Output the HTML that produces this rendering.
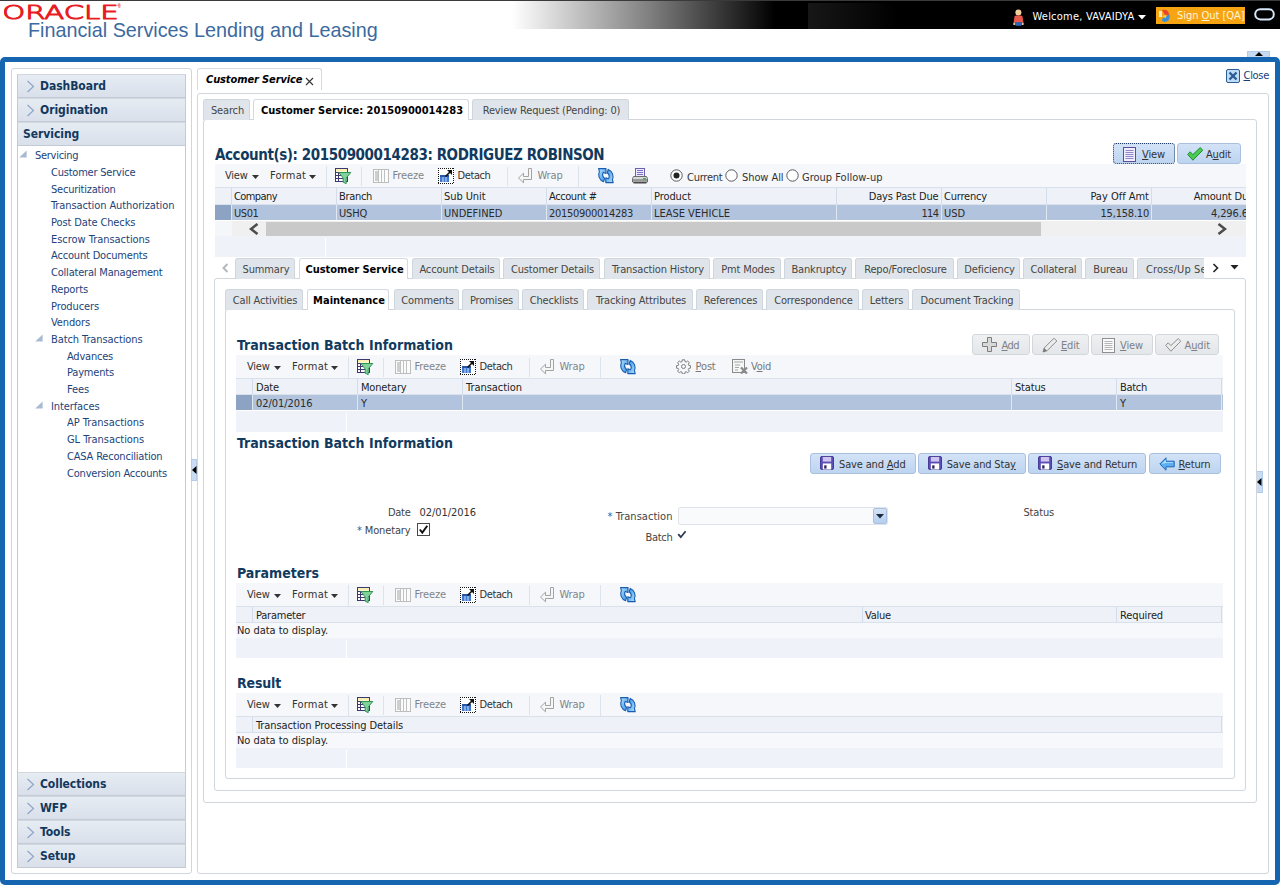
<!DOCTYPE html>
<html><head><meta charset="utf-8"><title>Oracle Financial Services Lending and Leasing</title>
<style>
*{box-sizing:border-box;margin:0;padding:0}
html,body{width:1280px;height:886px;overflow:hidden;background:#fff}
body{position:relative;font-family:"DejaVu Sans Condensed","Liberation Sans",sans-serif;font-size:11px;color:#333}
.abs{position:absolute}
.t{position:absolute;white-space:nowrap;line-height:14px;font-size:11px;letter-spacing:-0.15px}
.g{color:#8a8f94}
u{text-decoration:underline}
#hdr{position:absolute;left:0;top:0;width:1280px;height:29px;background:linear-gradient(90deg,#fff 0,#fff 512px,#7f7f7f 650px,#000 775px,#000 1280px)}
#hdrline{position:absolute;left:0;top:0;width:1280px;height:1px;background:#3a3a3a}
#brand{position:absolute;left:28px;top:18px;font-family:"Liberation Sans",sans-serif;font-size:19.8px;line-height:24px;color:#3b6a9e;white-space:nowrap}
#frame{position:absolute;left:0;top:57px;width:1280px;height:828px;border:5px solid #1565b0;border-radius:5px;background:#fff}
.panel{position:absolute;border:1px solid #d0d6dc;border-radius:3px;background:#fff}
.acc{position:absolute;left:17px;width:169px;height:24px;border:1px solid #c2cbd5;border-top-color:#d0d7e0;background:linear-gradient(#e7ecf3,#d9e0ea);font-weight:bold;font-size:12px;color:#12385e;line-height:22px;white-space:nowrap}
.acc span{position:absolute;left:22px;top:0;letter-spacing:-0.05px}
.acc svg{position:absolute;left:8px;top:5px}
#tree{position:absolute;left:17px;top:146px;width:169px;height:626px;border-left:1px solid #c2cbd5;border-right:1px solid #c2cbd5;background:#fff}
.tn{position:absolute;white-space:nowrap;color:#1c437a;line-height:14px;font-size:11px;letter-spacing:-0.1px}
.tab{position:absolute;height:21px;border:1px solid #cfd6dd;border-bottom:none;border-radius:3px 3px 0 0;background:#e0e5eb;color:#4a4a4a;font-size:11px;line-height:21px;text-align:center;white-space:nowrap;letter-spacing:-0.15px;padding-left:2px;color:#454545}
.tab.sel{background:#fff;color:#000;font-weight:bold;height:21px;line-height:21px;border-color:#d4dae0;letter-spacing:0}
.h1{position:absolute;white-space:nowrap;font-weight:bold;color:#113a5e;line-height:18px}
.tb{position:absolute;background:#f5f7fa}
.th{position:absolute;background:#eef2f8;border-top:1px solid #d9e1eb;border-bottom:1px solid #d9e1eb}
.cs{position:absolute;width:1px;background:#d3dce8}
.row{position:absolute;background:#b2c4dd}
.empty{position:absolute;background:#eff3f9}
.btn{position:absolute;height:21px;border:1px solid #a9c0de;border-radius:3px;background:linear-gradient(#d3e3f7,#bdd4f0);font-size:11px;line-height:21px;color:#333;white-space:nowrap}
.btn.dis{border-color:#d3d7db;background:linear-gradient(#eef0f2,#e4e7ea);color:#7c8187}
.btn span{position:absolute;top:0;letter-spacing:-0.15px}
.btn svg{position:absolute}
.sep{position:absolute;width:1px;background:#dde3ea}
</style></head><body>
<svg width="0" height="0" style="position:absolute"><defs><linearGradient id="rg" x1="0" y1="0" x2="1" y2="1"><stop offset="0" stop-color="#b4e2fd"/><stop offset="1" stop-color="#2f8de0"/></linearGradient></defs></svg>
<div id="hdr"></div><div class="abs" style="left:808px;top:3px;width:90px;height:26px;background:linear-gradient(90deg,#171717,#000)"></div><div id="hdrline"></div>
<svg class="abs" style="left:4px;top:3px" width="120" height="18"><text x="-1.8" y="16" font-family="DejaVu Sans Light, DejaVu Sans, Liberation Sans, sans-serif" font-weight="200" font-size="19.4" fill="#e81c23" stroke="#e81c23" stroke-width="1" stroke-linejoin="round" textLength="116.5" lengthAdjust="spacingAndGlyphs">ORACLE</text><text x="113.6" y="4.6" font-family="Liberation Sans, sans-serif" font-size="4.5" font-weight="bold" fill="#e81c23">®</text></svg>
<div id="brand">Financial Services Lending and Leasing</div>
<div id="frame"></div>
<div class="panel" style="left:11px;top:68px;width:181px;height:806px"></div>
<div class="acc" style="top:74px"><svg width="9" height="13" viewBox="0 0 9 13"><path d="M1.5 1 L7.5 6.5 L1.5 12" fill="none" stroke="#8fa5c4" stroke-width="1.2"/></svg><span>DashBoard</span></div>
<div class="acc" style="top:98px"><svg width="9" height="13" viewBox="0 0 9 13"><path d="M1.5 1 L7.5 6.5 L1.5 12" fill="none" stroke="#8fa5c4" stroke-width="1.2"/></svg><span>Origination</span></div>
<div class="acc" style="top:122px"><span style="left:5px">Servicing</span></div>
<div id="tree"></div>
<div class="tn" style="left:35px;top:149px;letter-spacing:-0.28px">Servicing</div>
<svg class="abs" style="left:19px;top:150px" width="8" height="8" viewBox="0 0 8 8"><path d="M7.6 0.4 L7.6 7.6 L0.2 7.6 Z" fill="#a9bbd2"/></svg>
<div class="tn" style="left:51px;top:166px;letter-spacing:-0.22px">Customer Service</div>
<div class="tn" style="left:51px;top:183px;letter-spacing:-0.23px">Securitization</div>
<div class="tn" style="left:51px;top:199px;letter-spacing:-0.10px">Transaction Authorization</div>
<div class="tn" style="left:51px;top:216px;letter-spacing:-0.12px">Post Date Checks</div>
<div class="tn" style="left:51px;top:233px;letter-spacing:-0.03px">Escrow Transactions</div>
<div class="tn" style="left:51px;top:249px;letter-spacing:-0.18px">Account Documents</div>
<div class="tn" style="left:51px;top:266px;letter-spacing:-0.20px">Collateral Management</div>
<div class="tn" style="left:51px;top:283px;letter-spacing:-0.13px">Reports</div>
<div class="tn" style="left:51px;top:300px;letter-spacing:-0.11px">Producers</div>
<div class="tn" style="left:51px;top:316px;letter-spacing:-0.12px">Vendors</div>
<div class="tn" style="left:51px;top:333px;letter-spacing:-0.09px">Batch Transactions</div>
<svg class="abs" style="left:35px;top:334px" width="8" height="8" viewBox="0 0 8 8"><path d="M7.6 0.4 L7.6 7.6 L0.2 7.6 Z" fill="#a9bbd2"/></svg>
<div class="tn" style="left:67px;top:350px;letter-spacing:-0.22px">Advances</div>
<div class="tn" style="left:67px;top:366px;letter-spacing:-0.18px">Payments</div>
<div class="tn" style="left:67px;top:383px;letter-spacing:-0.11px">Fees</div>
<div class="tn" style="left:51px;top:400px;letter-spacing:-0.10px">Interfaces</div>
<svg class="abs" style="left:35px;top:401px" width="8" height="8" viewBox="0 0 8 8"><path d="M7.6 0.4 L7.6 7.6 L0.2 7.6 Z" fill="#a9bbd2"/></svg>
<div class="tn" style="left:67px;top:416px;letter-spacing:-0.02px">AP Transactions</div>
<div class="tn" style="left:67px;top:433px;letter-spacing:-0.05px">GL Transactions</div>
<div class="tn" style="left:67px;top:450px;letter-spacing:-0.19px">CASA Reconciliation</div>
<div class="tn" style="left:67px;top:467px;letter-spacing:-0.20px">Conversion Accounts</div>
<div class="acc" style="top:772px"><svg width="9" height="13" viewBox="0 0 9 13"><path d="M1.5 1 L7.5 6.5 L1.5 12" fill="none" stroke="#8fa5c4" stroke-width="1.2"/></svg><span>Collections</span></div>
<div class="acc" style="top:796px"><svg width="9" height="13" viewBox="0 0 9 13"><path d="M1.5 1 L7.5 6.5 L1.5 12" fill="none" stroke="#8fa5c4" stroke-width="1.2"/></svg><span>WFP</span></div>
<div class="acc" style="top:820px"><svg width="9" height="13" viewBox="0 0 9 13"><path d="M1.5 1 L7.5 6.5 L1.5 12" fill="none" stroke="#8fa5c4" stroke-width="1.2"/></svg><span>Tools</span></div>
<div class="acc" style="top:844px"><svg width="9" height="13" viewBox="0 0 9 13"><path d="M1.5 1 L7.5 6.5 L1.5 12" fill="none" stroke="#8fa5c4" stroke-width="1.2"/></svg><span>Setup</span></div>
<div class="abs" style="left:191px;top:459px;width:6px;height:22px;background:#c9dcf3;border:1px solid #b4cbe8"></div>
<svg class="abs" style="left:192px;top:466px" width="5" height="8" viewBox="0 0 5 8"><path d="M4.5 0 L4.5 8 L0 4 Z" fill="#000"/></svg>
<div class="panel" style="left:197px;top:93px;width:1072px;height:781px"></div>
<div class="abs" style="left:197px;top:68px;width:125px;height:22px;border:1px solid #d4dae0;border-bottom:none;border-radius:3px 3px 0 0;background:#fff"></div>
<div class="t" style="left:206px;top:73px;font-weight:bold;font-style:italic;color:#000;letter-spacing:-0.11px">Customer Service</div>
<svg class="abs" style="left:305px;top:77px" width="9" height="9" viewBox="0 0 9 9"><path d="M1 1 L8 8 M8 1 L1 8" stroke="#333" stroke-width="1.1" fill="none"/></svg>
<svg class="abs" style="left:1226px;top:69px" width="14" height="14" viewBox="0 0 14 14"><rect x="0.5" y="0.5" width="13" height="13" rx="1.5" fill="#bfdcf7" stroke="#2a5d94"/><path d="M3.5 3.5 L10.5 10.5 M10.5 3.5 L3.5 10.5" stroke="#2a5d94" stroke-width="2.4"/></svg>
<div class="t" style="left:1243.5px;top:69px;color:#1b3b78;letter-spacing:-0.30px"><u>C</u>lose</div>
<div class="abs" style="left:1247px;top:51px;width:23px;height:6px;background:#c6daf1;border:1px solid #b3cae6;border-bottom:none"></div>
<svg class="abs" style="left:1255px;top:52px" width="8" height="4" viewBox="0 0 8 4"><path d="M0 4 L8 4 L4 0 Z" fill="#000"/></svg>
<div class="abs" style="left:1256px;top:471px;width:7px;height:22px;background:#c9dcf3;border:1px solid #b4cbe8"></div>
<svg class="abs" style="left:1257px;top:478px" width="5" height="8" viewBox="0 0 5 8"><path d="M4.5 0 L4.5 8 L0 4 Z" fill="#000"/></svg>
<div class="panel" style="left:203px;top:119px;width:1054px;height:684px"></div>
<div class="tab" style="left:203px;top:99px;width:47px">Search</div>
<div class="tab sel" style="left:253px;top:99px;width:216px">Customer Service: 20150900014283</div>
<div class="tab" style="left:472px;top:99px;width:157px">Review Request (Pending: 0)</div>
<div class="h1" style="left:215px;top:146px;font-size:15px;letter-spacing:-0.42px">Account(s): 20150900014283: RODRIGUEZ ROBINSON</div>
<div class="btn" style="left:1113px;top:143px;width:62px;border:1px dotted #1d3c66;"><svg style="left:9px;top:3px" width="13" height="15" viewBox="0 0 13 15"><rect x="0.5" y="0.5" width="12" height="14" fill="#f0edfc" stroke="#5b4f9a"/><path d="M2.5 3.5h8M2.5 5.5h8M2.5 7.5h8M2.5 9.5h8M2.5 11.5h8" stroke="#8f86c4" stroke-width="1"/></svg><span style="left:28px;letter-spacing:-0.12px"><u>V</u>iew</span></div>
<div class="btn" style="left:1177px;top:143px;width:64px;"><svg style="left:9px;top:3px" width="17" height="14" viewBox="0 0 17 14"><path d="M0.7 7.4 L3.2 4.8 L5.9 7.6 L13.2 0.6 L15.8 3.2 L5.9 13.2 Z" fill="#4cc955" stroke="#1f8f2c" stroke-width="1" stroke-linejoin="round"/></svg><span style="left:28px;letter-spacing:-0.20px">A<u>u</u>dit</span></div>
<div class="tb" style="left:215px;top:164px;width:1031px;height:23px"></div>
<div class="t" style="left:225px;top:169px;letter-spacing:-0.24px">View</div>
<svg class="abs" style="left:252px;top:175px" width="7" height="4" viewBox="0 0 7 4"><path d="M0 0 L7 0 L3.5 4 Z" fill="#333"/></svg>
<div class="t" style="left:270px;top:169px;letter-spacing:0.20px">Format</div>
<svg class="abs" style="left:309px;top:175px" width="7" height="4" viewBox="0 0 7 4"><path d="M0 0 L7 0 L3.5 4 Z" fill="#333"/></svg>
<div class="sep" style="left:326px;top:166px;height:23px"></div>
<svg class="abs" style="left:335px;top:168px" width="17" height="17" viewBox="0 0 17 17"><rect x="0.5" y="0.5" width="12" height="13" fill="#fff" stroke="#3f3870"/><rect x="1" y="1" width="11" height="2.6" fill="#fbf0b4"/><path d="M0.5 4.5h12M0.5 7.5h6M0.5 10.5h8M3.5 4.5v9" stroke="#3f3870" stroke-width="1" fill="none"/><path d="M3.8 4.5 L15.8 4.5 L11.2 10 L11.2 15.6 L8.2 14.2 L8.2 10 Z" fill="#7fd39a" stroke="#2f9455" stroke-width="1" stroke-linejoin="round"/></svg>
<div class="sep" style="left:361px;top:167px;height:19px"></div>
<svg class="abs" style="left:373px;top:169px" width="16" height="14" viewBox="0 0 16 14"><rect x="0.5" y="0.5" width="15" height="13" fill="#fbfbfb" stroke="#bdbdbd"/><rect x="2" y="2" width="3" height="10" fill="#cfcfcf"/><path d="M5.5 1v12M8.5 1v12M11.5 1v12" stroke="#c2c2c2" stroke-width="1"/></svg>
<div class="t" style="left:392.5px;top:169px;color:#80858b;letter-spacing:-0.11px">Freeze</div>
<svg class="abs" style="left:438px;top:168px" width="16" height="16" viewBox="0 0 16 16"><rect x="0" y="0" width="16" height="16" fill="#fff"/><path d="M0 0.5H16M0 15.5H16M0.5 0V16M15.5 0V16" stroke="#111" stroke-width="1" stroke-dasharray="1 1" fill="none"/><rect x="2" y="7" width="9" height="7" fill="#3f78d0"/><path d="M5 9v5M8 9v5" stroke="#cfe0f7" stroke-width="1"/><rect x="2" y="7" width="9" height="2" fill="#2a56a8"/><path d="M7.5 8.5 L13 3" stroke="#111" stroke-width="1.6"/><path d="M9 2 L14 2 L14 7 Z" fill="#111"/></svg>
<div class="t" style="left:457.5px;top:169px;letter-spacing:-0.40px">Detach</div>
<div class="sep" style="left:507px;top:167px;height:19px"></div>
<svg class="abs" style="left:518px;top:168px" width="15" height="16" viewBox="0 0 15 16"><path d="M10.5 0.5 h3 v11 h-8 v3.3 l-5 -4.8 l5 -4.8 v3.3 h5 z" fill="#f6f6f6" stroke="#a3a3a3" stroke-width="1" stroke-linejoin="round"/></svg>
<div class="t" style="left:537.5px;top:169px;color:#80858b;letter-spacing:-0.18px">Wrap</div>
<div class="sep" style="left:578px;top:166px;height:23px"></div>
<svg class="abs" style="left:598px;top:168px" width="17" height="16" viewBox="0 0 17 16"><g fill="url(#rg)" stroke="#185cb0" stroke-width="1.1" stroke-linejoin="round"><path d="M0.6 0.6 L8 0.6 L8 5.4 L5.4 4.4 C4.2 6.2 4.4 8.6 6.6 10.4 L5.6 13.8 C1.4 12.2 -0.2 7.6 1.4 3.6 Z"/><path d="M0.6 0.6 L8 0.6 L8 5.4 L5.4 4.4 C4.2 6.2 4.4 8.6 6.6 10.4 L5.6 13.8 C1.4 12.2 -0.2 7.6 1.4 3.6 Z" transform="rotate(180 7.9 7.6)"/></g></svg>
<svg class="abs" style="left:632px;top:168px" width="16" height="16" viewBox="0 0 16 16"><rect x="3.5" y="0.5" width="9" height="9" fill="#efeaff" stroke="#6a5fb3"/><path d="M5 2.5h6M5 4.5h6M5 6.5h6" stroke="#7a70c0"/><path d="M1.5 8.5 h13 l1 2 v3.5 h-15 v-3.5 z" fill="#d8d8d8" stroke="#6b6b6b" stroke-linejoin="round"/><rect x="1" y="11" width="14" height="2" fill="#9a9a9a"/><rect x="11" y="10" width="3" height="1.5" fill="#3fae4a"/><rect x="1.5" y="14" width="13" height="1.5" fill="#4a4a4a"/></svg>
<svg class="abs" style="left:670px;top:169px" width="13" height="13" viewBox="0 0 13 13"><circle cx="6.5" cy="6.5" r="5.7" fill="#fff" stroke="#5a5a5a" stroke-width="1"/><circle cx="6.5" cy="6.5" r="3" fill="#222"/></svg>
<div class="t" style="left:687px;top:171px;letter-spacing:-0.23px">Current</div>
<svg class="abs" style="left:725px;top:169px" width="13" height="13" viewBox="0 0 13 13"><circle cx="6.5" cy="6.5" r="5.7" fill="#fff" stroke="#5a5a5a" stroke-width="1"/></svg>
<div class="t" style="left:742px;top:171px;letter-spacing:-0.08px">Show All</div>
<svg class="abs" style="left:786px;top:169px" width="13" height="13" viewBox="0 0 13 13"><circle cx="6.5" cy="6.5" r="5.7" fill="#fff" stroke="#5a5a5a" stroke-width="1"/></svg>
<div class="t" style="left:802px;top:171px;letter-spacing:0.01px">Group Follow-up</div>
<div class="abs" style="left:215px;top:187px;width:1031px;overflow:hidden;height:77px">
<div class="th" style="left:0;top:0;width:1031px;height:18px"></div>
<div class="cs" style="left:16px;top:1px;height:16px"></div>
<div class="cs" style="left:121px;top:1px;height:16px"></div>
<div class="cs" style="left:226px;top:1px;height:16px"></div>
<div class="cs" style="left:331px;top:1px;height:16px"></div>
<div class="cs" style="left:436px;top:1px;height:16px"></div>
<div class="cs" style="left:621px;top:1px;height:16px"></div>
<div class="cs" style="left:726px;top:1px;height:16px"></div>
<div class="cs" style="left:831px;top:1px;height:16px"></div>
<div class="cs" style="left:936px;top:1px;height:16px"></div>
<div class="t" style="left:19px;top:3px;color:#222;letter-spacing:-0.58px">Company</div>
<div class="t" style="left:124px;top:3px;color:#222;letter-spacing:-0.32px">Branch</div>
<div class="t" style="left:229px;top:3px;color:#222;letter-spacing:-0.08px">Sub Unit</div>
<div class="t" style="left:334px;top:3px;color:#222;letter-spacing:-0.43px">Account #</div>
<div class="t" style="left:439px;top:3px;color:#222;letter-spacing:-0.08px">Product</div>
<div class="t" style="right:307.5px;top:3px;color:#222;letter-spacing:-0.13px">Days Past Due</div>
<div class="t" style="left:729px;top:3px;color:#222;letter-spacing:-0.19px">Currency</div>
<div class="t" style="right:97px;top:3px;color:#222;letter-spacing:-0.01px">Pay Off Amt</div>
<div class="t" style="right:-8px;top:3px;color:#222;letter-spacing:-0.17px">Amount Due</div>
<div class="row" style="left:0;top:18px;width:1031px;height:15px"></div>
<div class="abs" style="left:0;top:18px;width:16px;height:15px;background:#8da3c3"></div>
<div class="abs" style="left:16px;top:18px;width:1px;height:15px;background:#dfe7f1"></div>
<div class="abs" style="left:121px;top:18px;width:1px;height:15px;background:#dfe7f1"></div>
<div class="abs" style="left:226px;top:18px;width:1px;height:15px;background:#dfe7f1"></div>
<div class="abs" style="left:331px;top:18px;width:1px;height:15px;background:#dfe7f1"></div>
<div class="abs" style="left:436px;top:18px;width:1px;height:15px;background:#dfe7f1"></div>
<div class="abs" style="left:621px;top:18px;width:1px;height:15px;background:#dfe7f1"></div>
<div class="abs" style="left:726px;top:18px;width:1px;height:15px;background:#dfe7f1"></div>
<div class="abs" style="left:831px;top:18px;width:1px;height:15px;background:#dfe7f1"></div>
<div class="abs" style="left:936px;top:18px;width:1px;height:15px;background:#dfe7f1"></div>
<div class="t" style="left:19px;top:20px;color:#2b2b2b;letter-spacing:-0.41px">US01</div>
<div class="t" style="left:124px;top:20px;color:#2b2b2b;letter-spacing:-0.19px">USHQ</div>
<div class="t" style="left:229px;top:20px;color:#2b2b2b;letter-spacing:0.01px">UNDEFINED</div>
<div class="t" style="left:334px;top:20px;color:#2b2b2b;letter-spacing:-0.30px">20150900014283</div>
<div class="t" style="left:439px;top:20px;color:#2b2b2b;letter-spacing:-0.02px">LEASE VEHICLE</div>
<div class="t" style="right:307.5px;top:20px;color:#2b2b2b;letter-spacing:-0.60px">114</div>
<div class="t" style="left:729px;top:20px;color:#2b2b2b;letter-spacing:-0.05px">USD</div>
<div class="t" style="right:97px;top:20px;color:#2b2b2b;letter-spacing:-0.21px">15,158.10</div>
<div class="t" style="right:-8px;top:20px;color:#2b2b2b;letter-spacing:-0.13px">4,296.60</div>
<div class="abs" style="left:0;top:34px;width:1031px;height:16px;background:#f4f6fa"></div>
<div class="abs" style="left:17px;top:34px;width:1031px;height:15px;background:#f0f0f0"></div>
<div class="abs" style="left:51px;top:35px;width:775px;height:14px;background:#c9c9c9"></div>
<svg class="abs" style="left:34px;top:36px" width="10" height="12" viewBox="0 0 10 12"><path d="M8.5 1 L2 6 L8.5 11" fill="none" stroke="#4d4d4d" stroke-width="2.6"/></svg>
<svg class="abs" style="left:1002px;top:36px" width="10" height="12" viewBox="0 0 10 12"><path d="M1.5 1 L8 6 L1.5 11" fill="none" stroke="#4d4d4d" stroke-width="2.6"/></svg>
<div class="empty" style="left:0;top:49px;width:1031px;height:21px"></div>
<div class="abs" style="left:110px;top:51px;width:1px;height:19px;background:#fff"></div>
</div>
<div class="panel" style="left:214px;top:278px;width:1032px;height:513px"></div>
<svg class="abs" style="left:222px;top:263px" width="7" height="10" viewBox="0 0 7 10"><path d="M5.5 1 L1.5 5 L5.5 9" fill="none" stroke="#b4b8bc" stroke-width="2"/></svg>
<div class="abs" style="left:230px;top:255px;width:974px;height:24px;overflow:hidden">
<div class="tab" style="left:5px;top:3px;width:60px;">Summary</div>
<div class="tab sel" style="left:69px;top:3px;width:109px">Customer Service</div>
<div class="tab" style="left:182px;top:3px;width:88px;">Account Details</div>
<div class="tab" style="left:273px;top:3px;width:97px;">Customer Details</div>
<div class="tab" style="left:374px;top:3px;width:106px;">Transaction History</div>
<div class="tab" style="left:483px;top:3px;width:68px;">Pmt Modes</div>
<div class="tab" style="left:554px;top:3px;width:68px;">Bankruptcy</div>
<div class="tab" style="left:625px;top:3px;width:99px;">Repo/Foreclosure</div>
<div class="tab" style="left:727px;top:3px;width:63px;">Deficiency</div>
<div class="tab" style="left:793px;top:3px;width:59px;">Collateral</div>
<div class="tab" style="left:855px;top:3px;width:49px;">Bureau</div>
<div class="tab" style="left:907px;top:3px;width:70px;text-align:left;padding-left:8px;letter-spacing:0.1px;">Cross/Up Sell</div>
</div>
<svg class="abs" style="left:1212px;top:263px" width="7" height="10" viewBox="0 0 7 10"><path d="M1.5 1 L5.5 5 L1.5 9" fill="none" stroke="#222" stroke-width="1.6"/></svg>
<svg class="abs" style="left:1230px;top:265px" width="9" height="5" viewBox="0 0 9 5"><path d="M0.5 0 L8.5 0 L4.5 4.5 Z" fill="#222"/></svg>
<div class="panel" style="left:225px;top:309px;width:1010px;height:470px"></div>
<div class="tab" style="left:225px;top:289px;width:78px">Call Activities</div>
<div class="tab sel" style="left:307px;top:289px;width:82px">Maintenance</div>
<div class="tab" style="left:394px;top:289px;width:65px">Comments</div>
<div class="tab" style="left:462px;top:289px;width:57px">Promises</div>
<div class="tab" style="left:522px;top:289px;width:62px">Checklists</div>
<div class="tab" style="left:587px;top:289px;width:106px">Tracking Attributes</div>
<div class="tab" style="left:696px;top:289px;width:67px">References</div>
<div class="tab" style="left:766px;top:289px;width:93px">Correspondence</div>
<div class="tab" style="left:862px;top:289px;width:47px">Letters</div>
<div class="tab" style="left:912px;top:289px;width:108px">Document Tracking</div>
<div class="h1" style="left:237px;top:336px;font-size:14px;letter-spacing:0.03px">Transaction Batch Information</div>
<div class="btn dis" style="left:972px;top:334px;width:58px;"><svg style="left:9px;top:2px" width="15" height="15" viewBox="0 0 15 15"><path d="M5.5 0.5h4v5h5v4h-5v5h-4v-5h-5v-4h5z" fill="#d9d9d9" stroke="#7d7d7d" stroke-linejoin="round"/></svg><span style="left:28.5px;letter-spacing:-0.55px"><u>A</u>dd</span></div>
<div class="btn dis" style="left:1032px;top:334px;width:57px;"><svg style="left:9px;top:2px" width="16" height="16" viewBox="0 0 16 16"><path d="M1 15 L2.2 11 L12 1.2 L14.8 4 L5 13.8 Z" fill="#ececec" stroke="#8b8b8b" stroke-linejoin="round"/><path d="M1 15 L2.2 11 L5 13.8 Z" fill="#777"/></svg><span style="left:28px;letter-spacing:-0.17px"><u>E</u>dit</span></div>
<div class="btn dis" style="left:1091px;top:334px;width:62px;"><svg style="left:10px;top:3px" width="13" height="15" viewBox="0 0 13 15"><rect x="0.5" y="0.5" width="12" height="14" fill="#fafafa" stroke="#8f8f8f"/><path d="M2.5 3.5h8M2.5 5.5h8M2.5 7.5h8M2.5 9.5h8M2.5 11.5h8" stroke="#b5b5b5" stroke-width="1"/></svg><span style="left:28px;letter-spacing:-0.12px"><u>V</u>iew</span></div>
<div class="btn dis" style="left:1155px;top:334px;width:64px;"><svg style="left:9px;top:3px" width="17" height="14" viewBox="0 0 17 14"><path d="M0.7 7.4 L3.2 4.8 L5.9 7.6 L13.2 0.6 L15.8 3.2 L5.9 13.2 Z" fill="#ececec" stroke="#8e8e8e" stroke-width="1" stroke-linejoin="round"/></svg><span style="left:28.5px;letter-spacing:-0.10px">A<u>u</u>dit</span></div>
<div class="tb" style="left:236px;top:355px;width:987px;height:23px"></div>
<div class="t" style="left:247px;top:360px;letter-spacing:-0.24px">View</div>
<svg class="abs" style="left:274px;top:366px" width="7" height="4" viewBox="0 0 7 4"><path d="M0 0 L7 0 L3.5 4 Z" fill="#333"/></svg>
<div class="t" style="left:292px;top:360px;letter-spacing:0.20px">Format</div>
<svg class="abs" style="left:331px;top:366px" width="7" height="4" viewBox="0 0 7 4"><path d="M0 0 L7 0 L3.5 4 Z" fill="#333"/></svg>
<div class="sep" style="left:348px;top:357px;height:23px"></div>
<svg class="abs" style="left:357px;top:359px" width="17" height="17" viewBox="0 0 17 17"><rect x="0.5" y="0.5" width="12" height="13" fill="#fff" stroke="#3f3870"/><rect x="1" y="1" width="11" height="2.6" fill="#fbf0b4"/><path d="M0.5 4.5h12M0.5 7.5h6M0.5 10.5h8M3.5 4.5v9" stroke="#3f3870" stroke-width="1" fill="none"/><path d="M3.8 4.5 L15.8 4.5 L11.2 10 L11.2 15.6 L8.2 14.2 L8.2 10 Z" fill="#7fd39a" stroke="#2f9455" stroke-width="1" stroke-linejoin="round"/></svg>
<div class="sep" style="left:383px;top:358px;height:19px"></div>
<svg class="abs" style="left:395px;top:360px" width="16" height="14" viewBox="0 0 16 14"><rect x="0.5" y="0.5" width="15" height="13" fill="#fbfbfb" stroke="#bdbdbd"/><rect x="2" y="2" width="3" height="10" fill="#cfcfcf"/><path d="M5.5 1v12M8.5 1v12M11.5 1v12" stroke="#c2c2c2" stroke-width="1"/></svg>
<div class="t" style="left:414.5px;top:360px;color:#80858b;letter-spacing:-0.11px">Freeze</div>
<svg class="abs" style="left:460px;top:359px" width="16" height="16" viewBox="0 0 16 16"><rect x="0" y="0" width="16" height="16" fill="#fff"/><path d="M0 0.5H16M0 15.5H16M0.5 0V16M15.5 0V16" stroke="#111" stroke-width="1" stroke-dasharray="1 1" fill="none"/><rect x="2" y="7" width="9" height="7" fill="#3f78d0"/><path d="M5 9v5M8 9v5" stroke="#cfe0f7" stroke-width="1"/><rect x="2" y="7" width="9" height="2" fill="#2a56a8"/><path d="M7.5 8.5 L13 3" stroke="#111" stroke-width="1.6"/><path d="M9 2 L14 2 L14 7 Z" fill="#111"/></svg>
<div class="t" style="left:479.5px;top:360px;letter-spacing:-0.40px">Detach</div>
<div class="sep" style="left:529px;top:358px;height:19px"></div>
<svg class="abs" style="left:540px;top:359px" width="15" height="16" viewBox="0 0 15 16"><path d="M10.5 0.5 h3 v11 h-8 v3.3 l-5 -4.8 l5 -4.8 v3.3 h5 z" fill="#f6f6f6" stroke="#a3a3a3" stroke-width="1" stroke-linejoin="round"/></svg>
<div class="t" style="left:559.5px;top:360px;color:#80858b;letter-spacing:-0.18px">Wrap</div>
<div class="sep" style="left:600px;top:357px;height:23px"></div>
<svg class="abs" style="left:620px;top:359px" width="17" height="16" viewBox="0 0 17 16"><g fill="url(#rg)" stroke="#185cb0" stroke-width="1.1" stroke-linejoin="round"><path d="M0.6 0.6 L8 0.6 L8 5.4 L5.4 4.4 C4.2 6.2 4.4 8.6 6.6 10.4 L5.6 13.8 C1.4 12.2 -0.2 7.6 1.4 3.6 Z"/><path d="M0.6 0.6 L8 0.6 L8 5.4 L5.4 4.4 C4.2 6.2 4.4 8.6 6.6 10.4 L5.6 13.8 C1.4 12.2 -0.2 7.6 1.4 3.6 Z" transform="rotate(180 7.9 7.6)"/></g></svg>
<svg class="abs" style="left:676px;top:359px" width="15" height="15" viewBox="0 0 15 15"><g fill="none" stroke="#7b7b7b" stroke-width="1"><circle cx="7.5" cy="7.5" r="2"/><path d="M6.3 0.8h2.4l0.3 1.8 1.2 0.5 1.5-1.1 1.7 1.7-1.1 1.5 0.5 1.2 1.8 0.3v2.4l-1.8 0.3-0.5 1.2 1.1 1.5-1.7 1.7-1.5-1.1-1.2 0.5-0.3 1.8h-2.4l-0.3-1.8-1.2-0.5-1.5 1.1-1.7-1.7 1.1-1.5-0.5-1.2-1.8-0.3v-2.4l1.8-0.3 0.5-1.2-1.1-1.5 1.7-1.7 1.5 1.1 1.2-0.5z" stroke-linejoin="round"/></g></svg>
<div class="t" style="left:695.6px;top:360px;color:#777;letter-spacing:-0.17px"><u>P</u>ost</div>
<svg class="abs" style="left:732px;top:359px" width="16" height="15" viewBox="0 0 16 15"><rect x="0.5" y="0.5" width="12" height="13" fill="#f6f6f6" stroke="#8a8a8a"/><path d="M2 3h9M3 6h5M3 8.5h4M3 11h3" stroke="#a5a5a5"/><path d="M9 8.5 L15 14.5 M15 8.5 L9 14.5" stroke="#8a8a8a" stroke-width="2.2"/></svg>
<div class="t" style="left:751px;top:360px;color:#777;letter-spacing:-0.26px">V<u>o</u>id</div>
<div class="abs" style="left:236px;top:378px;width:987px;overflow:hidden;height:60px">
<div class="th" style="left:0;top:0;width:987px;height:17px"></div>
<div class="cs" style="left:16px;top:1px;height:15px"></div>
<div class="cs" style="left:121px;top:1px;height:15px"></div>
<div class="cs" style="left:226px;top:1px;height:15px"></div>
<div class="cs" style="left:775px;top:1px;height:15px"></div>
<div class="cs" style="left:880px;top:1px;height:15px"></div>
<div class="cs" style="left:985px;top:1px;height:15px"></div>
<div class="t" style="left:20px;top:3px;color:#222;letter-spacing:-0.16px">Date</div>
<div class="t" style="left:125px;top:3px;color:#222;letter-spacing:-0.17px">Monetary</div>
<div class="t" style="left:230px;top:3px;color:#222;letter-spacing:-0.04px">Transaction</div>
<div class="t" style="left:779px;top:3px;color:#222;letter-spacing:-0.17px">Status</div>
<div class="t" style="left:884px;top:3px;color:#222;letter-spacing:-0.29px">Batch</div>
<div class="row" style="left:0;top:17px;width:987px;height:15px"></div>
<div class="abs" style="left:0;top:17px;width:16px;height:15px;background:#8da3c3"></div>
<div class="abs" style="left:16px;top:17px;width:1px;height:15px;background:#dfe7f1"></div>
<div class="abs" style="left:121px;top:17px;width:1px;height:15px;background:#dfe7f1"></div>
<div class="abs" style="left:226px;top:17px;width:1px;height:15px;background:#dfe7f1"></div>
<div class="abs" style="left:775px;top:17px;width:1px;height:15px;background:#dfe7f1"></div>
<div class="abs" style="left:880px;top:17px;width:1px;height:15px;background:#dfe7f1"></div>
<div class="abs" style="left:985px;top:17px;width:1px;height:15px;background:#dfe7f1"></div>
<div class="t" style="left:20px;top:19px;color:#2b2b2b;letter-spacing:-0.05px">02/01/2016</div>
<div class="t" style="left:125px;top:19px;color:#2b2b2b;">Y</div>
<div class="t" style="left:884px;top:19px;color:#2b2b2b;">Y</div>
<div class="empty" style="left:0;top:33px;width:987px;height:21px"></div>
<div class="abs" style="left:110px;top:35px;width:1px;height:19px;background:#fff"></div>
</div>
<div class="h1" style="left:237px;top:434px;font-size:14px;letter-spacing:0.03px">Transaction Batch Information</div>
<div class="btn" style="left:810px;top:453px;width:106px;"><svg style="left:9px;top:2px" width="14" height="14" viewBox="0 0 15 15"><rect x="0.5" y="0.5" width="14" height="14" rx="1.5" fill="#5a4eb5" stroke="#3d3390"/><rect x="3" y="1" width="9" height="5" fill="#cfc6f0"/><rect x="3" y="8" width="9" height="6.5" fill="#fff"/><rect x="4.5" y="10" width="2.5" height="3.5" fill="#2c2560"/></svg><span style="left:28px;letter-spacing:-0.15px">Save and <u>A</u>dd</span></div>
<div class="btn" style="left:918px;top:453px;width:108px;"><svg style="left:9px;top:2px" width="14" height="14" viewBox="0 0 15 15"><rect x="0.5" y="0.5" width="14" height="14" rx="1.5" fill="#5a4eb5" stroke="#3d3390"/><rect x="3" y="1" width="9" height="5" fill="#cfc6f0"/><rect x="3" y="8" width="9" height="6.5" fill="#fff"/><rect x="4.5" y="10" width="2.5" height="3.5" fill="#2c2560"/></svg><span style="left:27.700000000000045px;letter-spacing:-0.17px">Save and Sta<u>y</u></span></div>
<div class="btn" style="left:1028px;top:453px;width:118px;"><svg style="left:9px;top:2px" width="14" height="14" viewBox="0 0 15 15"><rect x="0.5" y="0.5" width="14" height="14" rx="1.5" fill="#5a4eb5" stroke="#3d3390"/><rect x="3" y="1" width="9" height="5" fill="#cfc6f0"/><rect x="3" y="8" width="9" height="6.5" fill="#fff"/><rect x="4.5" y="10" width="2.5" height="3.5" fill="#2c2560"/></svg><span style="left:28px;letter-spacing:-0.13px"><u>S</u>ave and Return</span></div>
<div class="btn" style="left:1149px;top:453px;width:72px;"><svg style="left:9px;top:3px" width="16" height="14" viewBox="0 0 16 14"><path d="M7 0.8 L0.8 7 L7 13.2 L7 9.8 L15.2 9.8 L15.2 4.2 L7 4.2 Z" fill="#5ab0f2" stroke="#1f66b5" stroke-linejoin="round"/><path d="M7 2.8 L2.8 7 L7 6 L14 6 L14 5.2 L7 5.2Z" fill="#b9e0ff"/></svg><span style="left:28.5px;letter-spacing:-0.13px"><u>R</u>eturn</span></div>
<div class="t" style="right:869.5px;top:506px;color:#444;letter-spacing:-0.29px">Date</div>
<div class="t" style="left:419.5px;top:506px;color:#333;letter-spacing:-0.05px">02/01/2016</div>
<div class="t" style="right:869.5px;top:524px;color:#444;letter-spacing:-0.14px"><span style="color:#2a62a8">*</span> Monetary</div>
<svg class="abs" style="left:417px;top:523px" width="13" height="13" viewBox="0 0 13 13"><rect x="0.5" y="0.5" width="12" height="12" fill="#fff" stroke="#4a4a4a"/><path d="M2.8 6.5 L5.3 9.6 L10.3 2.8" fill="none" stroke="#111" stroke-width="1.9"/></svg>
<div class="t" style="right:607.5px;top:510px;color:#444;letter-spacing:0.03px"><span style="color:#2a62a8">*</span> Transaction</div>
<div class="abs" style="left:678px;top:507px;width:210px;height:18px;border:1px solid #dfe4ea;border-radius:2px;background:#f9fafc"></div>
<div class="abs" style="left:873px;top:508px;width:14px;height:16px;border:1px solid #a9c0de;border-radius:2px;background:linear-gradient(#d3e3f7,#b5cfee)"></div>
<svg class="abs" style="left:876px;top:514px" width="8" height="5" viewBox="0 0 8 5"><path d="M0 0 L8 0 L4 4.5 Z" fill="#1b2a40"/></svg>
<div class="t" style="right:607.5px;top:531px;color:#444;letter-spacing:-0.29px">Batch</div>
<svg class="abs" style="left:677px;top:530px" width="10" height="9" viewBox="0 0 10 9"><path d="M1.2 4.2 L3.8 7.2 L8.6 1.2" fill="none" stroke="#2b3a52" stroke-width="1.8"/></svg>
<div class="t" style="left:1023.5px;top:506px;color:#444;letter-spacing:-0.17px">Status</div>
<div class="h1" style="left:237px;top:564px;font-size:14px;letter-spacing:-0.00px">Parameters</div>
<div class="tb" style="left:236px;top:583px;width:987px;height:23px"></div>
<div class="t" style="left:247px;top:588px;letter-spacing:-0.24px">View</div>
<svg class="abs" style="left:274px;top:594px" width="7" height="4" viewBox="0 0 7 4"><path d="M0 0 L7 0 L3.5 4 Z" fill="#333"/></svg>
<div class="t" style="left:292px;top:588px;letter-spacing:0.20px">Format</div>
<svg class="abs" style="left:331px;top:594px" width="7" height="4" viewBox="0 0 7 4"><path d="M0 0 L7 0 L3.5 4 Z" fill="#333"/></svg>
<div class="sep" style="left:348px;top:585px;height:23px"></div>
<svg class="abs" style="left:357px;top:587px" width="17" height="17" viewBox="0 0 17 17"><rect x="0.5" y="0.5" width="12" height="13" fill="#fff" stroke="#3f3870"/><rect x="1" y="1" width="11" height="2.6" fill="#fbf0b4"/><path d="M0.5 4.5h12M0.5 7.5h6M0.5 10.5h8M3.5 4.5v9" stroke="#3f3870" stroke-width="1" fill="none"/><path d="M3.8 4.5 L15.8 4.5 L11.2 10 L11.2 15.6 L8.2 14.2 L8.2 10 Z" fill="#7fd39a" stroke="#2f9455" stroke-width="1" stroke-linejoin="round"/></svg>
<div class="sep" style="left:383px;top:586px;height:19px"></div>
<svg class="abs" style="left:395px;top:588px" width="16" height="14" viewBox="0 0 16 14"><rect x="0.5" y="0.5" width="15" height="13" fill="#fbfbfb" stroke="#bdbdbd"/><rect x="2" y="2" width="3" height="10" fill="#cfcfcf"/><path d="M5.5 1v12M8.5 1v12M11.5 1v12" stroke="#c2c2c2" stroke-width="1"/></svg>
<div class="t" style="left:414.5px;top:588px;color:#80858b;letter-spacing:-0.11px">Freeze</div>
<svg class="abs" style="left:460px;top:587px" width="16" height="16" viewBox="0 0 16 16"><rect x="0" y="0" width="16" height="16" fill="#fff"/><path d="M0 0.5H16M0 15.5H16M0.5 0V16M15.5 0V16" stroke="#111" stroke-width="1" stroke-dasharray="1 1" fill="none"/><rect x="2" y="7" width="9" height="7" fill="#3f78d0"/><path d="M5 9v5M8 9v5" stroke="#cfe0f7" stroke-width="1"/><rect x="2" y="7" width="9" height="2" fill="#2a56a8"/><path d="M7.5 8.5 L13 3" stroke="#111" stroke-width="1.6"/><path d="M9 2 L14 2 L14 7 Z" fill="#111"/></svg>
<div class="t" style="left:479.5px;top:588px;letter-spacing:-0.40px">Detach</div>
<div class="sep" style="left:529px;top:586px;height:19px"></div>
<svg class="abs" style="left:540px;top:587px" width="15" height="16" viewBox="0 0 15 16"><path d="M10.5 0.5 h3 v11 h-8 v3.3 l-5 -4.8 l5 -4.8 v3.3 h5 z" fill="#f6f6f6" stroke="#a3a3a3" stroke-width="1" stroke-linejoin="round"/></svg>
<div class="t" style="left:559.5px;top:588px;color:#80858b;letter-spacing:-0.18px">Wrap</div>
<div class="sep" style="left:600px;top:585px;height:23px"></div>
<svg class="abs" style="left:620px;top:587px" width="17" height="16" viewBox="0 0 17 16"><g fill="url(#rg)" stroke="#185cb0" stroke-width="1.1" stroke-linejoin="round"><path d="M0.6 0.6 L8 0.6 L8 5.4 L5.4 4.4 C4.2 6.2 4.4 8.6 6.6 10.4 L5.6 13.8 C1.4 12.2 -0.2 7.6 1.4 3.6 Z"/><path d="M0.6 0.6 L8 0.6 L8 5.4 L5.4 4.4 C4.2 6.2 4.4 8.6 6.6 10.4 L5.6 13.8 C1.4 12.2 -0.2 7.6 1.4 3.6 Z" transform="rotate(180 7.9 7.6)"/></g></svg>
<div class="abs" style="left:236px;top:606px;width:987px;overflow:hidden;height:59px">
<div class="th" style="left:0;top:0;width:987px;height:17px"></div>
<div class="cs" style="left:16px;top:1px;height:15px"></div>
<div class="cs" style="left:626px;top:1px;height:15px"></div>
<div class="cs" style="left:880px;top:1px;height:15px"></div>
<div class="cs" style="left:985px;top:1px;height:15px"></div>
<div class="t" style="left:20px;top:3px;color:#222;letter-spacing:-0.22px">Parameter</div>
<div class="t" style="left:629px;top:3px;color:#222;letter-spacing:-0.22px">Value</div>
<div class="t" style="left:884px;top:3px;color:#222;letter-spacing:-0.12px">Required</div>
<div class="abs" style="left:0;top:17px;width:987px;height:15px;background:#f6f8fb"></div>
<div class="t" style="left:1px;top:18px;color:#222;letter-spacing:-0.04px">No data to display.</div>
<div class="empty" style="left:0;top:32px;width:987px;height:20px"></div>
<div class="abs" style="left:110px;top:34px;width:1px;height:18px;background:#fff"></div>
</div>
<div class="h1" style="left:237px;top:674px;font-size:14px;letter-spacing:-0.18px">Result</div>
<div class="tb" style="left:236px;top:693px;width:987px;height:23px"></div>
<div class="t" style="left:247px;top:698px;letter-spacing:-0.24px">View</div>
<svg class="abs" style="left:274px;top:704px" width="7" height="4" viewBox="0 0 7 4"><path d="M0 0 L7 0 L3.5 4 Z" fill="#333"/></svg>
<div class="t" style="left:292px;top:698px;letter-spacing:0.20px">Format</div>
<svg class="abs" style="left:331px;top:704px" width="7" height="4" viewBox="0 0 7 4"><path d="M0 0 L7 0 L3.5 4 Z" fill="#333"/></svg>
<div class="sep" style="left:348px;top:695px;height:23px"></div>
<svg class="abs" style="left:357px;top:697px" width="17" height="17" viewBox="0 0 17 17"><rect x="0.5" y="0.5" width="12" height="13" fill="#fff" stroke="#3f3870"/><rect x="1" y="1" width="11" height="2.6" fill="#fbf0b4"/><path d="M0.5 4.5h12M0.5 7.5h6M0.5 10.5h8M3.5 4.5v9" stroke="#3f3870" stroke-width="1" fill="none"/><path d="M3.8 4.5 L15.8 4.5 L11.2 10 L11.2 15.6 L8.2 14.2 L8.2 10 Z" fill="#7fd39a" stroke="#2f9455" stroke-width="1" stroke-linejoin="round"/></svg>
<div class="sep" style="left:383px;top:696px;height:19px"></div>
<svg class="abs" style="left:395px;top:698px" width="16" height="14" viewBox="0 0 16 14"><rect x="0.5" y="0.5" width="15" height="13" fill="#fbfbfb" stroke="#bdbdbd"/><rect x="2" y="2" width="3" height="10" fill="#cfcfcf"/><path d="M5.5 1v12M8.5 1v12M11.5 1v12" stroke="#c2c2c2" stroke-width="1"/></svg>
<div class="t" style="left:414.5px;top:698px;color:#80858b;letter-spacing:-0.11px">Freeze</div>
<svg class="abs" style="left:460px;top:697px" width="16" height="16" viewBox="0 0 16 16"><rect x="0" y="0" width="16" height="16" fill="#fff"/><path d="M0 0.5H16M0 15.5H16M0.5 0V16M15.5 0V16" stroke="#111" stroke-width="1" stroke-dasharray="1 1" fill="none"/><rect x="2" y="7" width="9" height="7" fill="#3f78d0"/><path d="M5 9v5M8 9v5" stroke="#cfe0f7" stroke-width="1"/><rect x="2" y="7" width="9" height="2" fill="#2a56a8"/><path d="M7.5 8.5 L13 3" stroke="#111" stroke-width="1.6"/><path d="M9 2 L14 2 L14 7 Z" fill="#111"/></svg>
<div class="t" style="left:479.5px;top:698px;letter-spacing:-0.40px">Detach</div>
<div class="sep" style="left:529px;top:696px;height:19px"></div>
<svg class="abs" style="left:540px;top:697px" width="15" height="16" viewBox="0 0 15 16"><path d="M10.5 0.5 h3 v11 h-8 v3.3 l-5 -4.8 l5 -4.8 v3.3 h5 z" fill="#f6f6f6" stroke="#a3a3a3" stroke-width="1" stroke-linejoin="round"/></svg>
<div class="t" style="left:559.5px;top:698px;color:#80858b;letter-spacing:-0.18px">Wrap</div>
<div class="sep" style="left:600px;top:695px;height:23px"></div>
<svg class="abs" style="left:620px;top:697px" width="17" height="16" viewBox="0 0 17 16"><g fill="url(#rg)" stroke="#185cb0" stroke-width="1.1" stroke-linejoin="round"><path d="M0.6 0.6 L8 0.6 L8 5.4 L5.4 4.4 C4.2 6.2 4.4 8.6 6.6 10.4 L5.6 13.8 C1.4 12.2 -0.2 7.6 1.4 3.6 Z"/><path d="M0.6 0.6 L8 0.6 L8 5.4 L5.4 4.4 C4.2 6.2 4.4 8.6 6.6 10.4 L5.6 13.8 C1.4 12.2 -0.2 7.6 1.4 3.6 Z" transform="rotate(180 7.9 7.6)"/></g></svg>
<div class="abs" style="left:236px;top:716px;width:987px;overflow:hidden;height:59px">
<div class="th" style="left:0;top:0;width:987px;height:17px"></div>
<div class="cs" style="left:16px;top:1px;height:15px"></div>
<div class="cs" style="left:985px;top:1px;height:15px"></div>
<div class="t" style="left:20px;top:3px;color:#222;letter-spacing:-0.09px">Transaction Processing Details</div>
<div class="abs" style="left:0;top:17px;width:987px;height:15px;background:#f6f8fb"></div>
<div class="t" style="left:1px;top:18px;color:#222;letter-spacing:-0.04px">No data to display.</div>
<div class="empty" style="left:0;top:32px;width:987px;height:20px"></div>
<div class="abs" style="left:110px;top:34px;width:1px;height:18px;background:#fff"></div>
</div>
<svg class="abs" style="left:1012px;top:8px" width="13" height="19" viewBox="0 0 13 19"><circle cx="6.4" cy="4.4" r="3" fill="#efcf9f"/><path d="M2.6 8 Q6.5 6.4 10.4 8 L11.4 14.6 L9.6 14.6 L9.6 14.8 L3.4 14.8 L3.4 14.6 L1.6 14.6 Z" fill="#e8584a"/><rect x="1.4" y="14.6" width="2" height="2.4" fill="#efcf9f"/><rect x="9.6" y="14.6" width="2" height="2.4" fill="#efcf9f"/><rect x="3.6" y="14.2" width="5.8" height="3.6" fill="#2f63bd"/></svg>
<div class="t" style="left:1032.5px;top:10px;color:#fff;letter-spacing:0.21px">Welcome, VAVAIDYA</div>
<svg class="abs" style="left:1138px;top:15px" width="8" height="5" viewBox="0 0 8 5"><path d="M0 0 L8 0 L4 4.5 Z" fill="#fff"/></svg>
<div class="abs" style="left:1156px;top:7px;width:89px;height:17px;background:#f7a413"></div>
<svg class="abs" style="left:1158px;top:9px" width="13" height="14" viewBox="0 0 13 14"><path d="M1 2 h3 v6 h-3z" fill="#fbe9c8"/><path d="M4 1 Q11 0 11 6 L7.5 7 Z" fill="#e8452e"/><path d="M11.5 5 Q13 12 6.5 13 Q3 12.5 4.5 9.5 L8 7.5 Z" fill="#3a8fd8"/><path d="M4.5 7.5 L8.5 5.5 L8 9 Z" fill="#f7d04a"/></svg>
<div class="t" style="left:1177px;top:9px;color:#fff6d8;letter-spacing:-0.05px">Sign <u>O</u>ut [QA]</div>
<svg class="abs" style="left:1254px;top:8px" width="21" height="13" viewBox="0 0 21 13"><rect x="1.2" y="1.2" width="18.6" height="10.2" rx="5.1" fill="none" stroke="#d7e7fa" stroke-width="2"/></svg>
</body></html>
